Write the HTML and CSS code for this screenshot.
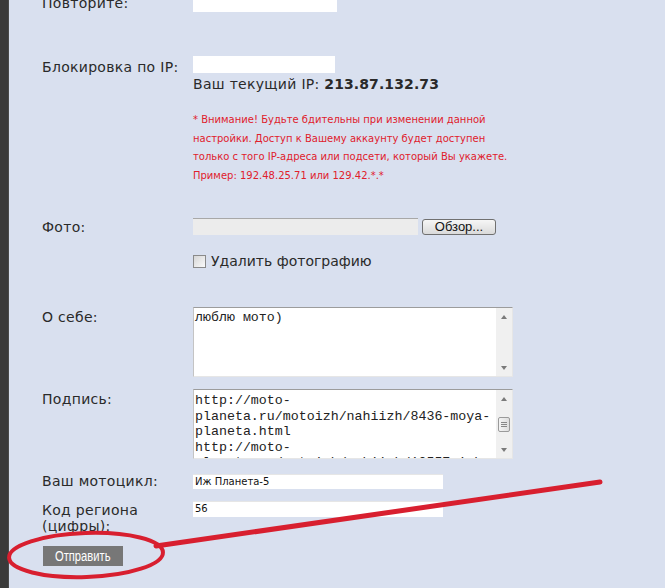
FILE: index.html
```html
<!DOCTYPE html>
<html lang="ru">
<head>
<meta charset="utf-8">
<title>Профиль</title>
<link rel="stylesheet" href="styles.css">
</head>
<body>
<div class="page">
  <div class="strip"></div>
  <div class="form">
    <div class="row row-first">
      <div class="label">Повторите:</div>
      <div class="field"><div class="input input-pass input-pass-wide"></div></div>
    </div>

    <div class="row row-ip">
      <div class="label">Блокировка по IP:</div>
      <div class="field">
        <div class="input input-pass"></div>
        <div class="ip-line">Ваш текущий IP: <b>213.87.132.73</b></div>
        <div class="note">* Внимание! Будьте бдительны при изменении данной<br>настройки. Доступ к Вашему аккаунту будет доступен<br>только с того IP-адреса или подсети, который Вы укажете.<br>Пример: 192.48.25.71 или 129.42.*.*</div>
      </div>
    </div>

    <div class="row row-photo">
      <div class="label">Фото:</div>
      <div class="field">
        <div class="file">
          <div class="file-box"></div>
          <div class="file-btn">Обзор...</div>
        </div>
        <div class="check-line"><span class="checkbox"></span>Удалить фотографию</div>
      </div>
    </div>

    <div class="row row-about">
      <div class="label">О себе:</div>
      <div class="field">
        <div class="textarea">
          <div class="ta-text">люблю мото)</div>
          <div class="ta-scroll"><span class="arrow arrow-up"></span><span class="arrow arrow-down"></span></div>
        </div>
      </div>
    </div>

    <div class="row row-sign">
      <div class="label">Подпись:</div>
      <div class="field">
        <div class="textarea">
          <div class="ta-text ta-text-sign">http://moto-
planeta.ru/motoizh/nahiizh/8436-moya-
planeta.html
http://moto-
planeta.ru/motoizh/nahiizh/10557-izh-</div>
          <div class="ta-scroll"><span class="arrow arrow-up"></span><span class="thumb"></span><span class="arrow arrow-down"></span></div>
        </div>
      </div>
    </div>

    <div class="row row-moto">
      <div class="label">Ваш мотоцикл:</div>
      <div class="field"><div class="input input-text">Иж Планета-5</div></div>
    </div>

    <div class="row row-region">
      <div class="label">Код региона (цифры):</div>
      <div class="field"><div class="input input-text input-region">56</div></div>
    </div>

    <div class="submit-row">
      <button class="submit"><span class="submit-text">Отправить</span></button>
    </div>
  </div>

  <svg class="annot" width="665" height="588" viewBox="0 0 665 588">
    <ellipse cx="86" cy="555" rx="77" ry="22" fill="none" stroke="#d81f2f" stroke-width="4" transform="rotate(-2 86 555)"/>
    <line x1="156" y1="546" x2="600" y2="482" stroke="#d81f2f" stroke-width="5" stroke-linecap="round"/>
  </svg>
</div>
</body>
</html>
```
FILE: styles.css
```css
html, body {
  margin: 0;
  padding: 0;
  height: 100%;
  overflow: hidden;
}
body {
  background: #d9e0ef;
  font-family: "DejaVu Sans", Verdana, sans-serif;
  font-size: 14px;
  color: #2a2a2a;
}
.page {
  position: relative;
  display: flex;
  height: 588px;
}
.strip {
  width: 8px;
  flex: none;
  background: #3a3a3a;
  border-right: 1px solid #4a4a4a;
}
.form {
  padding-left: 33px;
  margin-top: -6px;
  width: 560px;
}
.row {
  display: grid;
  grid-template-columns: 151px 1fr;
  align-items: start;
}
.label {
  line-height: 17px;
  padding-top: 2px;
  letter-spacing: 0.3px;
}
.row-first .label { padding-top: 1px; }
.row-first .field { padding-top: 1px; }
.row-ip { margin-top: 44px; }
.row-ip .label { padding-top: 3px; }
.row-photo { margin-top: 33px; }
.row-photo .label { padding-top: 1px; }
.row-about { margin-top: 37px; }
.row-sign { margin-top: 12px; }
.row-moto { margin-top: 15px; }
.row-moto .label { padding-top: 0; margin-top: -1px; }
.row-region { margin-top: 11px; }
.row-region .label { padding-top: 1px; width: 120px; line-height: 16px; }

.input {
  background: #fff;
  box-sizing: border-box;
}
.input-pass {
  width: 142px;
  height: 17px;
}
.input-pass-wide { width: 144px; }
.input-text {
  width: 250px;
  height: 15px;
  border-top: 1px solid #e6e6e6;
  font-size: 10px;
  line-height: 14px;
  padding-left: 2px;
  color: #111;
}
.input-region { height: 16px; }

.ip-line {
  margin-top: 2px;
  line-height: 18px;
  letter-spacing: 0.3px;
}
.ip-line b { font-weight: bold; letter-spacing: 0.1px; }
.note {
  margin-top: 18px;
  font-size: 10px;
  line-height: 18.5px;
  color: #e0202c;
}

.file {
  display: flex;
  align-items: flex-start;
  gap: 4px;
}
.file-box {
  width: 225px;
  height: 17px;
  box-sizing: border-box;
  background: #ececec;
  border-top: 1px solid #a8a8a8;
}
.file-btn {
  width: 74px;
  height: 16px;
  margin-top: 1px;
  box-sizing: border-box;
  border: 1px solid #707070;
  border-radius: 3px;
  background: linear-gradient(#f6f6f6, #dadada);
  font-family: "Liberation Sans", Arial, sans-serif;
  font-size: 13px;
  line-height: 14px;
  text-align: center;
  color: #111;
}
.check-line {
  margin-top: 17px;
  display: flex;
  align-items: center;
  line-height: 18px;
}
.checkbox {
  width: 13px;
  height: 13px;
  box-sizing: border-box;
  border: 1px solid #8a8a8a;
  background: linear-gradient(135deg, #d6d6d6, #fafafa);
  margin-right: 5px;
}

.textarea {
  display: flex;
  width: 320px;
  height: 70px;
  box-sizing: border-box;
  background: #fff;
  border: 1px solid;
  border-color: #9c9c9c #e6e6e6 #e6e6e6 #c4c4c4;
  overflow: hidden;
}
.ta-text {
  flex: 1;
  padding: 2px 0 0 1px;
  font-family: "Liberation Mono", "Courier New", monospace;
  font-size: 13.3px;
  line-height: 16px;
  white-space: pre;
  overflow: hidden;
  color: #222;
}
.ta-text-sign {
  padding-top: 3px;
  line-height: 15.6px;
}
.ta-scroll {
  width: 16px;
  flex: none;
  background: #f0f0f0;
  display: flex;
  flex-direction: column;
  align-items: center;
  justify-content: space-between;
  padding: 7px 0 6px;
  box-sizing: border-box;
}
.arrow {
  width: 0;
  height: 0;
  border-left: 3.5px solid transparent;
  border-right: 3.5px solid transparent;
}
.arrow-up { border-bottom: 4px solid #7a7a7a; }
.arrow-down { border-top: 4px solid #7a7a7a; }
.thumb {
  width: 12px;
  height: 15px;
  box-sizing: border-box;
  border: 1px solid #9a9a9a;
  border-radius: 2px;
  background:
    linear-gradient(#888, #888) center 4px / 6px 1px no-repeat,
    linear-gradient(#888, #888) center 6px / 6px 1px no-repeat,
    linear-gradient(#888, #888) center 8px / 6px 1px no-repeat,
    linear-gradient(90deg, #f4f4f4, #dedede);
}

.submit-row {
  margin-top: 12px;
  padding-left: 1px;
}
.submit {
  width: 80px;
  height: 20px;
  border: none;
  margin: 0;
  padding: 0;
  background: #777777;
  color: #fff;
  font-family: "Liberation Sans", Arial, sans-serif;
  font-size: 14px;
  line-height: 20px;
  text-align: center;
}
.submit-text {
  display: inline-block;
  transform: scaleX(0.8);
}

.annot {
  position: absolute;
  left: 0;
  top: 0;
  pointer-events: none;
}
```
